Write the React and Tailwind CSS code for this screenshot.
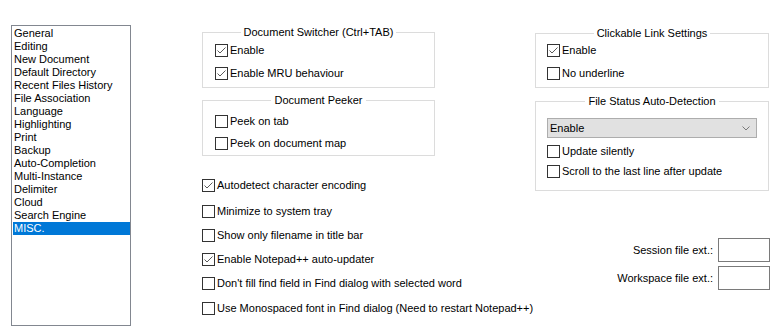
import React from 'react';

const PAGES = [
  'General', 'Editing', 'New Document', 'Default Directory', 'Recent Files History',
  'File Association', 'Language', 'Highlighting', 'Print', 'Backup',
  'Auto-Completion', 'Multi-Instance', 'Delimiter', 'Cloud', 'Search Engine', 'MISC.',
];

function CheckBox({ checked, label, className = '' }) {
  return (
    <div className={`flex items-center gap-[2px] h-[13px] whitespace-nowrap ${className}`}>
      <div className="w-[13px] h-[13px] shrink-0 border border-[#333333] bg-white">
        {checked && (
          <svg width="11" height="11" viewBox="0 0 11 11">
            <path d="M1.5 5.5 L4 8 L9.5 2.5" fill="none" stroke="#5b5b5b" strokeWidth="1" />
          </svg>
        )}
      </div>
      <span className="leading-[13px]">{label}</span>
    </div>
  );
}

function Group({ title, className = '', children }) {
  return (
    <div className={`relative border border-[#dcdcdc] ${className}`}>
      <div className="absolute -top-[7px] left-0 right-0 flex justify-center">
        <span className="bg-white px-[3px] leading-[13px]">{title}</span>
      </div>
      {children}
    </div>
  );
}

export default function App() {
  return (
    <div
      className="w-[782px] h-[334px] bg-white flex pl-[11px] pt-[25px] text-[11px] text-black"
      style={{ fontFamily: '"Liberation Sans", Arial, sans-serif' }}
    >
      {/* Page list */}
      <div className="w-[120px] h-[301px] shrink-0 border border-[#828790] pt-[1px] pl-[1px]">
        {PAGES.map(p => (
          <div
            key={p}
            className={`h-[13px] leading-[13px] pl-[1px] ${p === 'MISC.' ? 'bg-[#0078d7] text-white' : ''}`}
          >
            {p}
          </div>
        ))}
      </div>

      {/* Left column */}
      <div className="ml-[71px] w-[233px] shrink-0 pt-[7px] flex flex-col">
        <Group title="Document Switcher (Ctrl+TAB)" className="h-[56px] pt-[11px] pl-[12px] flex flex-col gap-[10px]">
          <CheckBox checked label="Enable" />
          <CheckBox checked label="Enable MRU behaviour" />
        </Group>
        <Group title="Document Peeker" className="mt-[12px] h-[56px] pt-[14px] pl-[12px] flex flex-col gap-[9px]">
          <CheckBox label="Peek on tab" />
          <CheckBox label="Peek on document map" />
        </Group>
        <div className="mt-[23px] flex flex-col">
          <CheckBox checked label="Autodetect character encoding" />
          <CheckBox className="mt-[13px]" label="Minimize to system tray" />
          <CheckBox className="mt-[11px]" label="Show only filename in title bar" />
          <CheckBox className="mt-[11px]" checked label="Enable Notepad++ auto-updater" />
          <CheckBox className="mt-[11px]" label="Don't fill find field in Find dialog with selected word" />
          <CheckBox className="mt-[12px]" label="Use Monospaced font in Find dialog (Need to restart Notepad++)" />
        </div>
      </div>

      {/* Right column */}
      <div className="ml-[100px] w-[234px] shrink-0 pt-[8px] flex flex-col">
        <Group title="Clickable Link Settings" className="h-[55px] pt-[10px] pl-[11px] flex flex-col gap-[10px]">
          <CheckBox checked label="Enable" />
          <CheckBox label="No underline" />
        </Group>
        <Group title="File Status Auto-Detection" className="mt-[13px] h-[90px] pt-[16px] pl-[11px] pr-[11px] flex flex-col">
          <div className="h-[20px] border border-[#adadad] bg-[#e1e1e1] flex items-center justify-between pl-[2px] pr-[6px]">
            <span className="leading-[13px]">Enable</span>
            <svg width="8" height="5" viewBox="0 0 8 5">
              <path d="M0.5 0.5 L4 4 L7.5 0.5" fill="none" stroke="#7a7a7a" strokeWidth="1" />
            </svg>
          </div>
          <CheckBox className="mt-[7px]" label="Update silently" />
          <CheckBox className="mt-[7px]" label="Scroll to the last line after update" />
        </Group>
        <div className="mt-[47px] flex flex-col gap-[4px] items-end -mr-[1px]">
          <div className="flex items-center gap-[5px]">
            <span className="leading-[13px]">Session file ext.:</span>
            <div className="w-[52px] h-[24px] border border-[#7a7a7a] bg-white" />
          </div>
          <div className="flex items-center gap-[5px]">
            <span className="leading-[13px]">Workspace file ext.:</span>
            <div className="w-[52px] h-[24px] border border-[#7a7a7a] bg-white" />
          </div>
        </div>
      </div>
    </div>
  );
}
